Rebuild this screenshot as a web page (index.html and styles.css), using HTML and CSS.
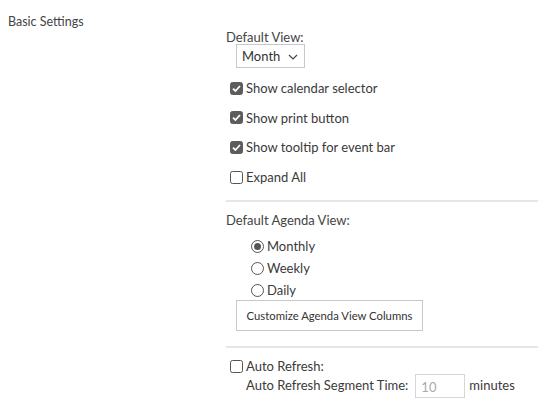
FILE: index.html
```html
<!DOCTYPE html>
<html>
<head>
<meta charset="utf-8">
<link rel="stylesheet" href="styles.css">
</head>
<body>
<div class="page">
  <div class="side">Basic Settings</div>
  <div class="main">
    <div class="label">Default View:</div>
    <div class="select">
      <span>Month</span>
      <svg class="chev" width="10" height="6" viewBox="0 0 10 6"><path d="M1 1 L5 5 L9 1" fill="none" stroke="#444" stroke-width="1.2"/></svg>
    </div>
    <div class="checks">
      <div class="row">
        <svg class="box" width="13" height="13" viewBox="0 0 13 13"><rect x="0.5" y="0.5" width="12" height="12" rx="2" fill="#5c5c5c" stroke="#5c5c5c"/><path d="M3 6.6 L5.4 9 L10 4" fill="none" stroke="#fff" stroke-width="1.8"/></svg>
        <span>Show calendar selector</span>
      </div>
      <div class="row">
        <svg class="box" width="13" height="13" viewBox="0 0 13 13"><rect x="0.5" y="0.5" width="12" height="12" rx="2" fill="#5c5c5c" stroke="#5c5c5c"/><path d="M3 6.6 L5.4 9 L10 4" fill="none" stroke="#fff" stroke-width="1.8"/></svg>
        <span>Show print button</span>
      </div>
      <div class="row">
        <svg class="box" width="13" height="13" viewBox="0 0 13 13"><rect x="0.5" y="0.5" width="12" height="12" rx="2" fill="#5c5c5c" stroke="#5c5c5c"/><path d="M3 6.6 L5.4 9 L10 4" fill="none" stroke="#fff" stroke-width="1.8"/></svg>
        <span>Show tooltip for event bar</span>
      </div>
      <div class="row">
        <svg class="box" width="13" height="13" viewBox="0 0 13 13"><rect x="0.5" y="0.5" width="12" height="12" rx="2" fill="#fff" stroke="#555"/></svg>
        <span>Expand All</span>
      </div>
    </div>
    <div class="sep"></div>
    <div class="label label2">Default Agenda View:</div>
    <div class="radios">
      <div class="rrow">
        <svg class="radio" width="13" height="13" viewBox="0 0 13 13"><circle cx="6.5" cy="6.5" r="6" fill="#fff" stroke="#555"/><circle cx="6.5" cy="6.5" r="3.5" fill="#555"/></svg>
        <span>Monthly</span>
      </div>
      <div class="rrow">
        <svg class="radio" width="13" height="13" viewBox="0 0 13 13"><circle cx="6.5" cy="6.5" r="6" fill="#fff" stroke="#555"/></svg>
        <span>Weekly</span>
      </div>
      <div class="rrow">
        <svg class="radio" width="13" height="13" viewBox="0 0 13 13"><circle cx="6.5" cy="6.5" r="6" fill="#fff" stroke="#555"/></svg>
        <span>Daily</span>
      </div>
    </div>
    <div class="btn">Customize Agenda View Columns</div>
    <div class="sep sep2"></div>
    <div class="row auto">
      <svg class="box" width="13" height="13" viewBox="0 0 13 13"><rect x="0.5" y="0.5" width="12" height="12" rx="2" fill="#fff" stroke="#555"/></svg>
      <span>Auto Refresh:</span>
    </div>
    <div class="seg">
      <span>Auto Refresh Segment Time:</span>
      <div class="input">10</div>
      <span>minutes</span>
    </div>
  </div>
</div>
</body>
</html>
```

FILE: styles.css
```css
html, body {
  margin: 0;
  padding: 0;
  background: #fff;
}
body {
  font-family: Lato, "Open Sans", sans-serif;
  color: #3a3a3a;
  font-size: 13px;
}
.page {
  display: flex;
  width: 538px;
}
.side {
  width: 218px;
  padding-left: 8px;
  padding-top: 13px;
  font-size: 12.5px;
  line-height: 18px;
  color: #444;
}
.main {
  flex: 1;
  padding-top: 28px;
  display: flex;
  flex-direction: column;
}
.label {
  line-height: 18px;
  color: #444;
}
.select {
  margin-top: -2px;
  margin-left: 10px;
  height: 22px;
  border: 1px solid #c8c8c8;
  display: flex;
  align-items: center;
  justify-content: space-between;
  padding: 0 6px 0 5px;
  box-sizing: content-box;
  width: 56px;
  color: #333;
}
.chev {
  margin-top: 1px;
}
.checks {
  margin-top: 11px;
  display: flex;
  flex-direction: column;
  gap: 11.7px;
}
.row {
  display: flex;
  align-items: center;
  gap: 3px;
  margin-left: 4px;
  height: 18px;
  line-height: 18px;
}
.box {
  flex: none;
}
.sep {
  margin-top: 14px;
  height: 2px;
  background: #e6e6e6;
}
.label2 {
  margin-top: 9px;
}
.radios {
  margin-top: 8px;
  margin-left: 25px;
  display: flex;
  flex-direction: column;
  gap: 4px;
}
.rrow {
  display: flex;
  align-items: center;
  gap: 3px;
  height: 18px;
}
.radio {
  flex: none;
}
.btn {
  margin-top: 1px;
  margin-left: 10px;
  width: 185px;
  height: 29px;
  border: 1px solid #c8c8c8;
  display: flex;
  align-items: center;
  justify-content: center;
  font-size: 11.3px;
  color: #333;
}
.sep2 {
  margin-top: 15px;
}
.auto {
  margin-top: 9px;
}
.seg {
  margin-left: 20px;
  display: flex;
  align-items: center;
  gap: 4px;
  margin-top: -3px;
}
.input {
  width: 43px;
  height: 22px;
  border: 1px solid #d6d6d6;
  color: #aaa;
  padding-left: 5px;
  line-height: 24px;
  margin-left: 3px;
  margin-top: 2px;
}
```
